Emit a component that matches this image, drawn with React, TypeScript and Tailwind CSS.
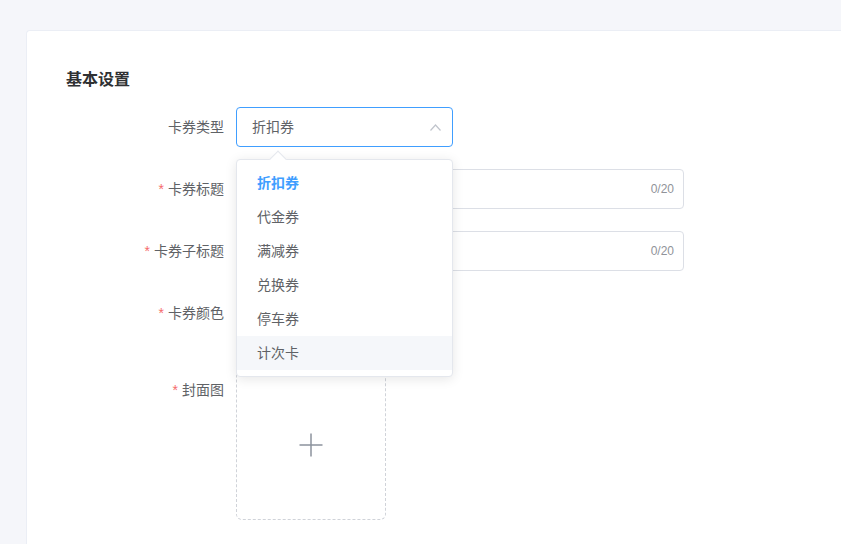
const types = ['折扣券', '代金券', '满减券', '兑换券', '停车券', '计次卡'];

function Label({ text, required }: { text: string; required?: boolean }) {
  return (
    <label className="w-[170px] shrink-0 pr-3 text-right text-sm leading-10 text-[#606266]">
      {required && <span className="mr-1 text-[#f56c6c]">*</span>}
      {text}
    </label>
  );
}

function CountInput() {
  return (
    <div className="flex h-10 w-[448px] items-center justify-end rounded border border-[#dcdfe6] bg-white pr-[9px]">
      <span className="font-['Liberation_Sans',sans-serif] text-xs text-[#909399]">0/20</span>
    </div>
  );
}

export default function App() {
  return (
    <div className="flex h-[544px] overflow-hidden bg-[#f5f6fa] pl-[26px] pt-[30px] font-['Liberation_Sans','Noto_Sans_CJK_SC',sans-serif]">
      <div className="flex-1 rounded-tl border-l border-t border-[#ebeef5] bg-white pl-[39px] pt-[37px]">
        <h2 className="text-base font-bold leading-6 text-[#303133]">基本设置</h2>

        <div className="mt-[15px]">
          <div className="mb-[22px] flex">
            <Label text="卡券类型" />
            <div className="relative">
              <div className="flex h-10 w-[217px] items-center justify-between rounded border border-[#409eff] bg-white pl-[15px] pr-[11px]">
                <span className="text-sm text-[#606266]">折扣券</span>
                <svg width="11" height="7" viewBox="0 0 11 7" fill="none">
                  <polyline points="0.5,6.5 5.5,1 10.5,6.5" stroke="#c0c4cc" strokeWidth="1.2" />
                </svg>
              </div>

              <div className="absolute left-0 top-[52px] z-10 w-[217px] rounded border border-[#e4e7ed] bg-white py-1.5 shadow-[0_2px_12px_0_rgba(0,0,0,0.1)]">
                <div className="absolute -top-[7px] left-[35px] h-3 w-3 rotate-45 border-l border-t border-[#e4e7ed] bg-white" />
                {types.map((t, i) => (
                  <div
                    key={t}
                    className={
                      'relative h-[34px] pl-5 text-sm leading-[34px] ' +
                      (i === 0 ? 'font-bold text-[#409eff]' : 'text-[#606266]') +
                      (i === 5 ? ' bg-[#f5f7fa]' : '')
                    }
                  >
                    {t}
                  </div>
                ))}
              </div>
            </div>
          </div>

          <div className="mb-[22px] flex">
            <Label text="卡券标题" required />
            <CountInput />
          </div>

          <div className="mb-[22px] flex">
            <Label text="卡券子标题" required />
            <CountInput />
          </div>

          <div className="mb-[22px] flex h-[55px]">
            <Label text="卡券颜色" required />
            <div className="h-10 w-10 rounded border border-[#e6e6e6] p-1">
              <div className="h-full w-full rounded-sm bg-[#409eff]" />
            </div>
          </div>

          <div className="flex">
            <Label text="封面图" required />
            <div className="flex h-[150px] w-[150px] items-center justify-center rounded-md border border-dashed border-[#d0d3d9]">
              <svg width="24" height="24" viewBox="0 0 24 24" fill="none">
                <path d="M12 0.5V23.5M0.5 12H23.5" stroke="#8c939d" strokeWidth="1.5" />
              </svg>
            </div>
          </div>
        </div>
      </div>
    </div>
  );
}
